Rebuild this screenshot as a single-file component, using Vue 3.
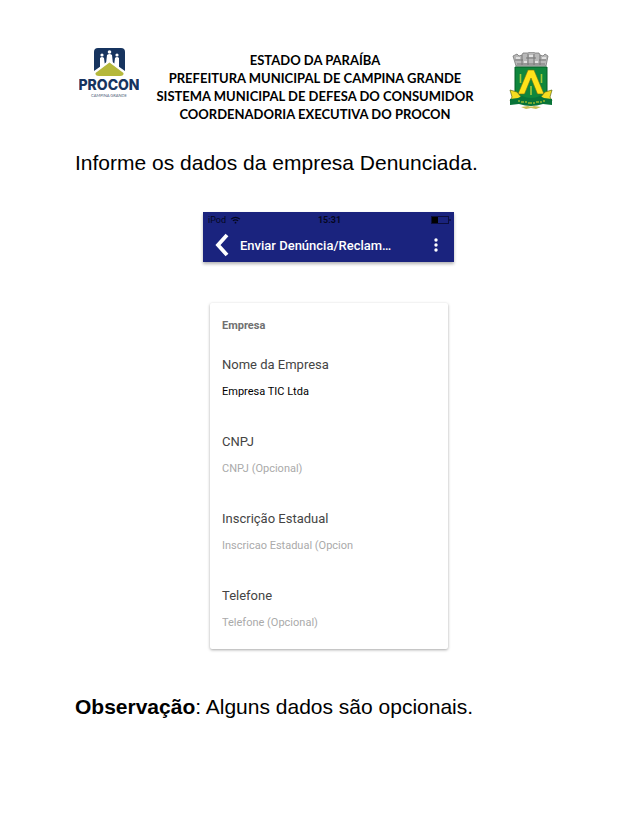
<script setup>
import { reactive } from 'vue'

const fields = reactive([
  { id: 'nome', label: 'Nome da Empresa', value: 'Empresa TIC Ltda', hint: '' },
  { id: 'cnpj', label: 'CNPJ', value: '', hint: 'CNPJ (Opcional)' },
  { id: 'inscricao', label: 'Inscrição Estadual', value: '', hint: 'Inscricao Estadual (Opcion' },
  { id: 'telefone', label: 'Telefone', value: '', hint: 'Telefone (Opcional)' }
])
</script>

<template>
  <main class="page">
    <header class="letterhead">
      <svg class="procon" viewBox="0 0 60 52" role="img" aria-label="Procon">
        <rect x="15" y="1" width="31" height="29" rx="4" fill="#17345f" />
        <g fill="#fff">
          <circle cx="23" cy="8" r="1.600" />
          <circle cx="30.500" cy="5" r="1.800" />
          <circle cx="38" cy="8" r="1.600" />
          <path d="M21 11q2-2 4 0l1 8-5 4zM28 8q2.500-2 5 0l1 9h-7zM36 11q2-2 4 0v12l-5-4z" />
          <path d="M30.500 13L46 24v6H15v-6z" />
        </g>
        <path d="M30.500 15.500L44.500 26q.5 3-3.500 3H20q-4 0-3.500-3z" fill="#b5b83c" />
        <text x="30" y="43" class="procon-name">PROCON</text>
        <text x="30" y="50" class="procon-city">CAMPINA GRANDE</text>
      </svg>
      <h1 class="office">
        ESTADO DA PARAÍBA<br />
        PREFEITURA MUNICIPAL DE CAMPINA GRANDE<br />
        SISTEMA MUNICIPAL DE DEFESA DO CONSUMIDOR<br />
        COORDENADORIA EXECUTIVA DO PROCON
      </h1>
      <svg class="crest" viewBox="0 0 44 58" aria-hidden="true">
        <path d="M4 4l4-2 2 2 3-1 1-2 5 0 2-1h3l2 1 4 0 1 2 3 1 2-2 3 2-2 10H7z" fill="#b8b8b8" stroke="#777" stroke-width=".8" />
        <path d="M6 8h8M17 6h10M30 8h7M8 12h28M13 3v10M19 2v11M25 2v11M31 3v10" stroke="#777" stroke-width="1" fill="none" />
        <path d="M7 6h4M20 4h4M33 6h4M15 10h3M26 10h3" stroke="#eee" stroke-width="1.500" />
        <path d="M6 15h32v25q0 7-16 12Q6 47 6 40z" fill="#0f873c" stroke="#075d28" />
        <path d="M11.500 22v9M32.500 22v9M22 34v9" stroke="#a3c83b" stroke-width="1.600" />
        <path d="M19 18h6l10 24h-6.500L22 26l-6.500 16H9z" fill="#ffe21a" stroke="#746f12" stroke-width=".6" />
        <path d="M1 38l7 2 5 6-3 4-9-1 2-4zM43 38l-7 2-5 6 3 4 9-1-2-4z" fill="#f7dc20" stroke="#5d6a16" stroke-width=".7" />
        <path d="M1 47l8-1 4-2q9 4 18 0l4 2 8 1v6l-9-1q-12 4-24 0l-9 1z" fill="#087438" />
        <path d="M9 49h2M12 50h3M16 50h2M19 51h4M24 51h2M27 50h3M31 50h2M34 49h2" stroke="#d5d92a" />
        <path d="M12 55l7-1q3 1 6 0l7 1-5 2-5-1-5 1z" fill="#c9bd55" />
      </svg>
    </header>

    <p class="lead">Informe os dados da empresa Denunciada.</p>

    <section class="app">
      <div class="bar">
        <div class="status">
          <span class="carrier">iPod
            <svg class="wifi" viewBox="0 0 12 9" aria-hidden="true">
              <path d="M1 3.500q5-4 10 0M3 5.500q3-2.500 6 0" fill="none" stroke="#05071f" stroke-width="1.300" />
              <circle cx="6" cy="7.500" r="1" fill="#05071f" />
            </svg>
          </span>
          <span class="clock">15:31</span>
          <svg class="battery" viewBox="0 0 20 8" aria-hidden="true">
            <rect x=".5" y=".5" width="17" height="7" fill="none" stroke="#0b0e3c" />
            <path d="M1 1h6v6H1z" fill="#000" />
            <path d="M19 3v2" stroke="#0b0e3c" stroke-width="1.500" />
          </svg>
        </div>
        <div class="toolbar">
          <button type="button" aria-label="Voltar">
            <svg class="back" viewBox="0 0 14 24" aria-hidden="true">
              <path d="M12 2L3 12l9 10" fill="none" stroke="#fff" stroke-width="3.800" />
            </svg>
          </button>
          <h2>Enviar Denúncia/Reclam…</h2>
          <button type="button" aria-label="Mais opções">
            <svg class="more" viewBox="0 0 4 14" aria-hidden="true">
              <g fill="#fff"><circle cx="2" cy="2" r="1.700" /><circle cx="2" cy="7" r="1.700" /><circle cx="2" cy="12" r="1.700" /></g>
            </svg>
          </button>
        </div>
      </div>

      <form class="card" @submit.prevent>
        <h3>Empresa</h3>
        <div v-for="f in fields" :key="f.id" class="field">
          <label :for="f.id">{{ f.label }}</label>
          <input :id="f.id" v-model="f.value" type="text" :placeholder="f.hint" />
        </div>
      </form>
    </section>

    <p class="note"><strong>Observação</strong>: Alguns dados são opcionais.</p>
  </main>
</template>

<style>
body {
  margin: 0;
  background: #fff;
}
</style>

<style scoped>
.page {
  padding: 47px 56px 60px 75px;
  color: #000;
  font-family: "Liberation Sans", Arial, sans-serif;
}
.letterhead {
  display: flex;
  align-items: flex-start;
  justify-content: space-between;
  padding: 0 29px 0 4px;
}
.procon {
  width: 60px;
  height: 52px;
}
.procon-name {
  font: 800 14px Inter, sans-serif;
  fill: #17345f;
  text-anchor: middle;
}
.procon-city {
  font: 4px Lato, sans-serif;
  fill: #53647c;
  text-anchor: middle;
}
.office {
  margin: 4px 18px 0 0;
  font: 700 13px/18px Lato, sans-serif;
  text-align: center;
}
.crest {
  width: 44px;
  height: 58px;
  margin-top: 5px;
}
.lead,
.note {
  margin: 0;
  font-size: 21px;
  line-height: 24px;
}
.lead {
  margin-top: 28px;
}
.app {
  max-width: 251px;
  margin: 37px auto 46px;
  font-family: Roboto, sans-serif;
}
.bar {
  background: #1a237e;
  box-shadow: 0 2px 3px rgba(0, 0, 0, 0.3);
}
.status {
  display: grid;
  grid-template-columns: 1fr auto 1fr;
  align-items: center;
  height: 16px;
  padding: 0 3px 0 5px;
  color: #05071f;
  font-size: 9px;
}
.clock {
  font-weight: 700;
}
.carrier {
  display: flex;
  align-items: center;
  gap: 4px;
}
.wifi {
  width: 11px;
  height: 8px;
}
.battery {
  width: 20px;
  height: 8px;
  justify-self: end;
}
.toolbar {
  display: flex;
  align-items: center;
  height: 34px;
  padding: 0 16px 0 12px;
}
button {
  display: flex;
  padding: 0;
  border: 0;
  background: none;
}
.back {
  width: 14px;
  height: 24px;
}
.more {
  width: 4px;
  height: 14px;
}
h2 {
  flex: 1;
  margin: 0 0 0 11px;
  color: #fff;
  font-size: 13px;
  font-weight: 500;
  white-space: nowrap;
}
.card {
  margin: 41px 6px 0 7px;
  padding: 12px 12px 13px;
  border-radius: 2px;
  box-shadow: 0 1px 3px rgba(0, 0, 0, 0.35);
}
h3 {
  margin: 0 0 16px;
  color: #707070;
  font-size: 11px;
  line-height: 22px;
  font-weight: 700;
}
.field + .field {
  margin-top: 25px;
}
label {
  display: block;
  color: #444;
  font-size: 13px;
  line-height: 24px;
}
input {
  display: block;
  box-sizing: border-box;
  width: 135px;
  height: 28px;
  padding: 0;
  border: 0;
  outline: 0;
  background: none;
  color: #000;
  font: 11px Roboto, sans-serif;
}
input::placeholder {
  color: #aaa;
  opacity: 1;
}
</style>
